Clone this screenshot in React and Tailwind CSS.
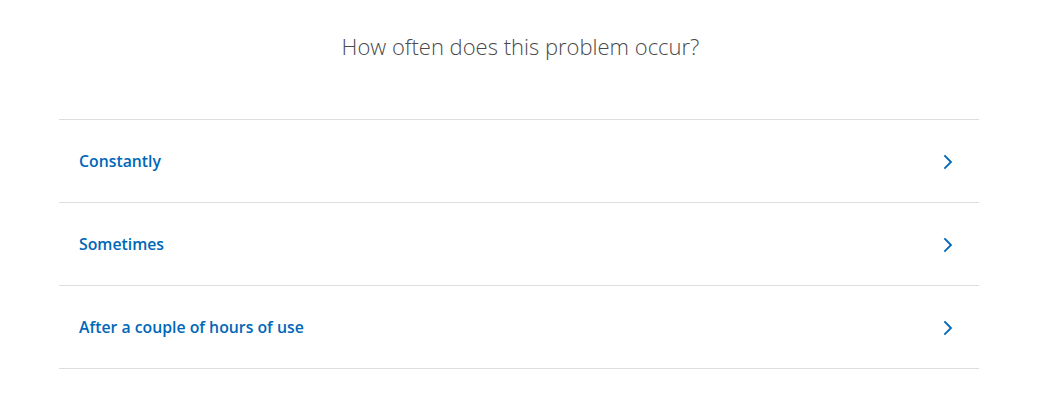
import React from "react";

const items = ["Constantly", "Sometimes", "After a couple of hours of use"];

function Chevron() {
  return (
    <svg width="10" height="16" viewBox="0 0 10 16" fill="none" className="mt-[2px]">
      <path d="M2 2 L8 8 L2 14" stroke="#0067b8" strokeWidth="1.8" strokeLinecap="square" strokeLinejoin="miter" />
    </svg>
  );
}

export default function App() {
  return (
    <div className="w-[1045px] h-[413px] bg-white" style={{ fontFamily: '"Open Sans", "Noto Sans", sans-serif' }}>
      <h1 className="pt-[30px] pr-[4px] text-center text-[22px] leading-[32px] font-light text-[#4a4a4a]">
        How often does this problem occur?
      </h1>
      <div className="mx-[59px] mt-[57px] border-t border-[#dddddd] w-[920px]">
        {items.map((t) => (
          <div key={t} className="h-[83px] border-b border-[#dddddd] flex items-center justify-between pl-[20px] pr-[26px]">
            <span className="text-[15.8px] font-semibold text-[#0067b8] mt-[1px]">{t}</span>
            <Chevron />
          </div>
        ))}
      </div>
    </div>
  );
}
